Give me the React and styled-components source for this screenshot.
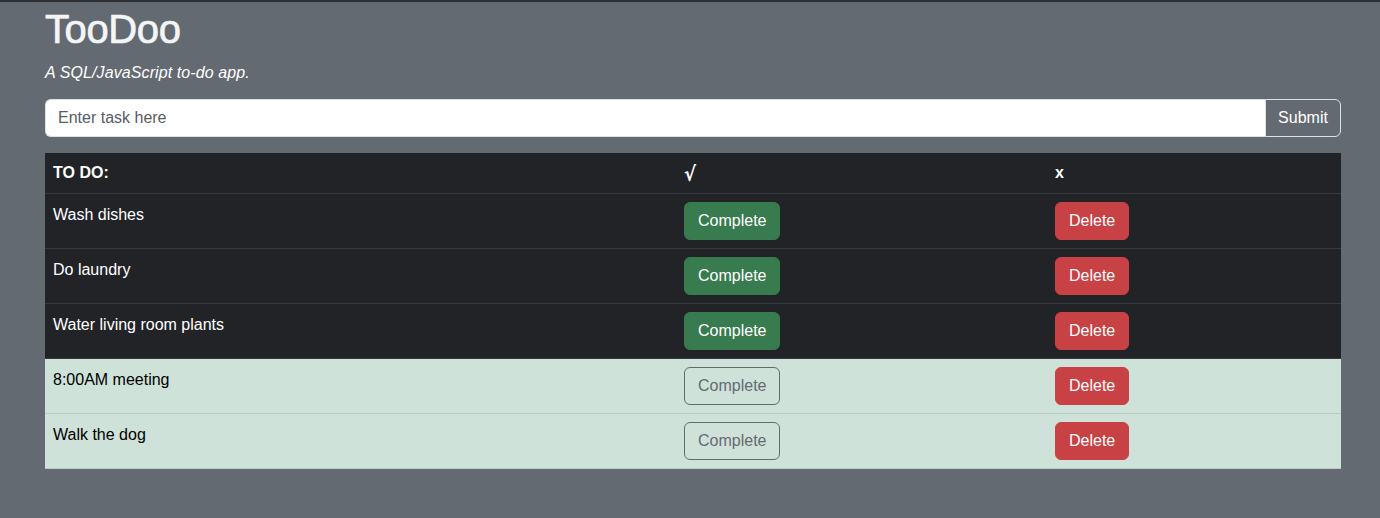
import React from 'react'
import styled, { createGlobalStyle } from 'styled-components'

const GlobalStyle = createGlobalStyle`
  * { box-sizing: border-box; }
  body {
    margin: 0;
    background: #646a72;
    font-family: "Liberation Sans", Arial, sans-serif;
    color: #ffffff;
  }
`;

const tasks = [
  { name: 'Wash dishes', done: false },
  { name: 'Do laundry', done: false },
  { name: 'Water living room plants', done: false },
  { name: '8:00AM meeting', done: true },
  { name: 'Walk the dog', done: true },
];

const App = () => {
  return (
    <Page>
      <GlobalStyle />
      <Container>
        <Title>TooDoo</Title>
        <Tagline>A SQL/JavaScript to-do app.</Tagline>
        <InputGroup>
          <TaskInput placeholder="Enter task here" />
          <SubmitBtn>Submit</SubmitBtn>
        </InputGroup>
        <Table>
          <thead>
            <HeadRow>
              <Th style={{ width: 631 }}>TO DO:</Th>
              <Th style={{ width: 371 }}><Check>√</Check></Th>
              <Th>x</Th>
            </HeadRow>
          </thead>
          <tbody>
            {tasks.map(t => (
              <Row key={t.name} $done={t.done}>
                <Td>{t.name}</Td>
                <Td><CompleteBtn $done={t.done}>Complete</CompleteBtn></Td>
                <Td><DeleteBtn>Delete</DeleteBtn></Td>
              </Row>
            ))}
          </tbody>
        </Table>
      </Container>
    </Page>
  )
}

export default App;

const Page = styled.div`
  min-height: 518px;
  border-top: 2px solid #2d2f33;
`;

const Container = styled.div`
  width: 1296px;
  margin-left: 45px;
  padding-top: 3px;
`;

const Title = styled.h1`
  margin: 0 0 8px;
  font-size: 40px;
  font-weight: 500;
  line-height: 1.2;
  color: #f4f5f6;
  letter-spacing: -0.4px;
  -webkit-text-stroke: 0.7px #f4f5f6;
`;

const Tagline = styled.p`
  margin: 0 0 14px;
  font-size: 16px;
  font-style: italic;
  line-height: 24px;
  letter-spacing: 0.1px;
`;

const InputGroup = styled.div`
  display: flex;
  height: 38px;
  margin-bottom: 16px;
`;

const TaskInput = styled.input`
  flex: 1;
  height: 38px;
  padding: 6px 12px;
  font-family: inherit;
  font-size: 16px;
  color: #212529;
  background: #ffffff;
  border: 1px solid #dee2e6;
  border-right: none;
  border-radius: 6px 0 0 6px;
  outline: none;
  &::placeholder { color: #595c5f; }
`;

const SubmitBtn = styled.button`
  width: 76px;
  height: 38px;
  font-family: inherit;
  font-size: 16px;
  color: #ffffff;
  background: #646a72;
  border: 1px solid #dee2e6;
  border-radius: 0 6px 6px 0;
  cursor: pointer;
`;

const Table = styled.table`
  width: 100%;
  border-collapse: collapse;
  font-size: 16px;
  line-height: 24px;
`;

const HeadRow = styled.tr`
  background: #212326;
  border-bottom: 1px solid #36393d;
  height: 40px;
`;

const Th = styled.th`
  padding: 8px;
  height: 40px;
  text-align: left;
  font-weight: 700;
  color: #ffffff;
  vertical-align: top;
  line-height: 24px;
`;

const Check = styled.span`
  font-family: "DejaVu Sans", sans-serif;
  font-size: 20px;
  line-height: 24px;
  height: 24px;
  display: inline-block;
  vertical-align: top;
  transform: translateY(1px) scaleX(0.9);
  transform-origin: left center;
`;

const Row = styled.tr`
  background: ${p => (p.$done ? '#cfe2d9' : '#212326')};
  color: ${p => (p.$done ? '#000000' : '#ffffff')};
  border-bottom: 1px solid ${p => (p.$done ? '#b9cbc3' : '#36393d')};
`;

const Td = styled.td`
  padding: 9px 8px 7px;
  vertical-align: top;
  height: 55px;
`;

const Btn = styled.button`
  height: 38px;
  margin-top: -1px;
  padding: 6px 13px;
  font-family: inherit;
  font-size: 16px;
  line-height: 24px;
  border-radius: 6px;
  cursor: pointer;
`;

const CompleteBtn = styled(Btn)`
  color: ${p => (p.$done ? '#646a72' : '#ffffff')};
  background: ${p => (p.$done ? 'transparent' : '#377b4f')};
  border: 1px solid ${p => (p.$done ? '#646a72' : '#377b4f')};
`;

const DeleteBtn = styled(Btn)`
  color: #ffffff;
  background: #c84144;
  border: 1px solid #c84144;
`;
